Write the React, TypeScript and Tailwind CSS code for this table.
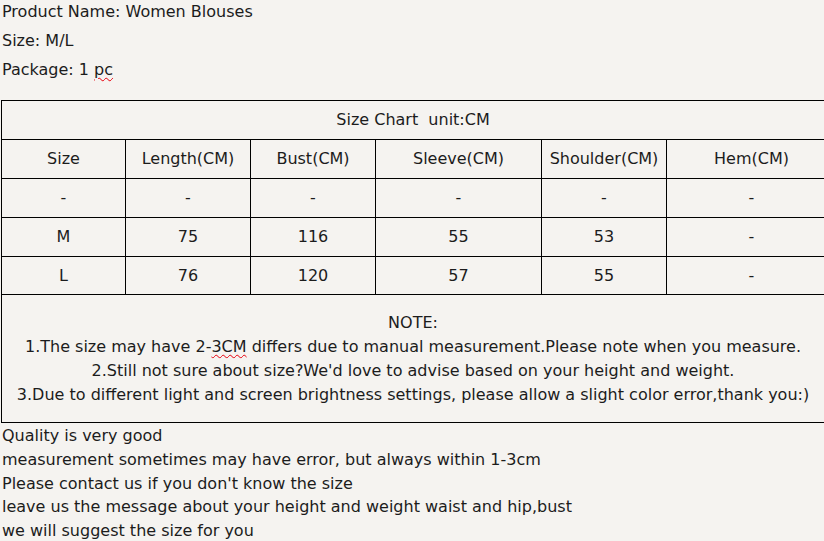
import React from "react";

const cols = ["w-[124px]", "w-[125px]", "w-[125px]", "w-[166px]", "w-[125px]", "w-[170px]"];

function Row({ cells, h }: { cells: string[]; h: string }) {
  return (
    <div className={`flex ${h}`}>
      {cells.map((c, i) => (
        <div
          key={i}
          className={`${cols[i]} shrink-0 flex items-center justify-center border-r border-b border-black`}
        >
          {c}
        </div>
      ))}
    </div>
  );
}

export default function App() {
  return (
    <div
      className="w-[824px] h-[541px] overflow-hidden bg-[#f5f3f0] text-[#1c1c1c] text-[16px]"
      style={{ fontFamily: '"DejaVu Sans", sans-serif' }}
    >
      <div className="pl-[2px]">
        <div className="h-[29px] leading-[24px]">Product Name: Women Blouses</div>
        <div className="h-[29px] leading-[24px]">Size: M/L</div>
        <div className="h-[29px] leading-[24px]">
          Package: 1{" "}
          <span className="underline decoration-wavy decoration-red-600 decoration-1 underline-offset-2">pc</span>
        </div>
      </div>
      <div className="mt-[13px] ml-px w-[860px] border-l border-t border-black">
        <div className="h-[39px] w-[835px] flex items-center border-b border-black">
          <span className="w-[822px] text-center whitespace-pre">Size Chart  unit:CM</span>
        </div>
        <Row h="h-[39px]" cells={["Size", "Length(CM)", "Bust(CM)", "Sleeve(CM)", "Shoulder(CM)", "Hem(CM)"]} />
        <Row h="h-[39px]" cells={["-", "-", "-", "-", "-", "-"]} />
        <Row h="h-[39px]" cells={["M", "75", "116", "55", "53", "-"]} />
        <Row h="h-[38px]" cells={["L", "76", "120", "57", "55", "-"]} />
        <div className="h-[128px] w-[835px] flex items-center border-b border-black">
          <div className="w-[822px] text-center leading-[24px]">
            <div>NOTE:</div>
            <div>
              1.The size may have 2-
              <span className="underline decoration-wavy decoration-red-600 decoration-1 underline-offset-2">3CM</span>{" "}
              differs due to manual measurement.Please note when you measure.
            </div>
            <div>2.Still not sure about size?We'd love to advise based on your height and weight.</div>
            <div>3.Due to different light and screen brightness settings, please allow a slight color error,thank you:)</div>
          </div>
        </div>
      </div>
      <div className="pl-[2px] pt-px leading-[23.75px]">
        <div>Quality is very good</div>
        <div>measurement sometimes may have error, but always within 1-3cm</div>
        <div>Please contact us if you don't know the size</div>
        <div>leave us the message about your height and weight waist and hip,bust</div>
        <div>we will suggest the size for you</div>
      </div>
    </div>
  );
}
